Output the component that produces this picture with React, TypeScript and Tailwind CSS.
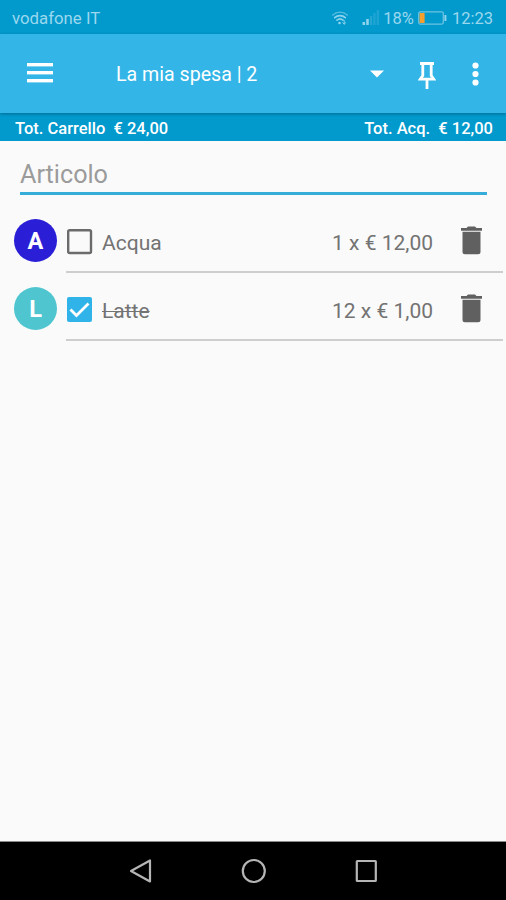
import { useState } from 'react';
import clsx from 'clsx';

interface Item {
  id: number;
  name: string;
  price: string;
  color: string;
  done: boolean;
}

const ITEMS: Item[] = [
  { id: 1, name: 'Acqua', price: '1 x € 12,00', color: 'bg-[#2a1fd6]', done: false },
  { id: 2, name: 'Latte', price: '12 x € 1,00', color: 'bg-[#4ec5cf]', done: true },
];

function WifiIcon() {
  return (
    <svg width="18" height="16" viewBox="0 0 18 16" fill="none" stroke="#8fd3ec" strokeLinecap="round">
      <path d="M1.5 5.2C5.8 1.2 12.2 1.2 16.5 5.2" strokeWidth="1.2" opacity="0.6" />
      <path d="M3.7 7.7C6.8 4.8 11.2 4.8 14.3 7.7" strokeWidth="1.7" />
      <path d="M6 10.2C7.8 8.6 10.2 8.6 12 10.2" strokeWidth="1.7" />
      <circle cx="8.5" cy="13" r="1.3" fill="#8fd3ec" stroke="none" />
      <path d="M13.2 10.6V14M11.8 12.8l1.4 1.3 1.4-1.3" strokeWidth="1" />
    </svg>
  );
}

function SignalIcon() {
  return (
    <svg width="18" height="16" viewBox="0 0 18 16" fill="#8fd3ec">
      <rect x="0.5" y="12" width="2.6" height="3" />
      <rect x="4.2" y="9" width="2.6" height="6" />
      <rect x="7.8" y="6" width="2.4" height="9" opacity="0.25" />
      <rect x="11.2" y="3" width="2.4" height="12" opacity="0.2" />
      <rect x="14.6" y="0" width="2.4" height="15" opacity="0.2" />
    </svg>
  );
}

function BatteryIcon() {
  return (
    <svg width="30" height="14" viewBox="0 0 30 14" fill="none">
      <rect x="0.7" y="0.9" width="24.6" height="12.2" rx="1.5" stroke="#6cc3e3" strokeWidth="1.3" />
      <rect x="1.6" y="2" width="5" height="10" fill="#f5a02c" />
      <rect x="26.4" y="4" width="2" height="6" rx="0.5" fill="#8fd3ec" />
    </svg>
  );
}

function StatusBar() {
  return (
    <header className="flex h-[34px] items-center bg-[#0299cd] pt-1 text-[#9bd8ee]">
      <span className="ml-3 text-[16.8px]">vodafone IT</span>
      <div className="mr-[13px] ml-auto flex items-center text-[16.5px]">
        <div className="pb-[2px]">
          <WifiIcon />
        </div>
        <div className="ml-[13px] pb-[2px]">
          <SignalIcon />
        </div>
        <span className="ml-[3px]">18%</span>
        <div className="ml-1 pb-[2px]">
          <BatteryIcon />
        </div>
        <span className="ml-1">12:23</span>
      </div>
    </header>
  );
}

function Toolbar() {
  return (
    <div className="relative z-10 flex h-[79px] items-center bg-[#33b5e7] text-white shadow-[0_1px_3px_rgba(0,0,0,0.3)]">
      <button aria-label="Menu" className="ml-[27px] pb-px">
        <svg width="26" height="20" viewBox="0 0 26 20" fill="white">
          <rect y="0" width="26" height="3.4" />
          <rect y="8" width="26" height="3.4" />
          <rect y="16" width="26" height="3.4" />
        </svg>
      </button>
      <span className="ml-[63px] pt-[3px] text-[19.6px]">La mia spesa | 2</span>
      <button aria-label="Liste" className="ml-auto">
        <svg width="14" height="8" viewBox="0 0 14 8" fill="white">
          <path d="M0 0.5h14L7 7.5z" />
        </svg>
      </button>
      <button aria-label="Fissa" className="ml-[34px] pt-[4px]">
        <svg width="18" height="30" viewBox="0 0 18 30" fill="none" stroke="white">
          <path d="M2 2.5h14" strokeWidth="3" />
          <path d="M4.8 3v11.5L2.2 18.2h13.6l-2.600-3.700V3" strokeWidth="2.8" />
          <path d="M9 18v10" strokeWidth="2.8" />
        </svg>
      </button>
      <button aria-label="Altro" className="mr-[27px] ml-[36px]">
        <svg width="7" height="24" viewBox="0 0 7 24" fill="white">
          <circle cx="3.5" cy="3.5" r="3.1" />
          <circle cx="3.5" cy="12" r="3.1" />
          <circle cx="3.5" cy="20.5" r="3.1" />
        </svg>
      </button>
    </div>
  );
}

function Checkbox({ checked, onChange }: { checked: boolean; onChange: () => void }) {
  return (
    <button role="checkbox" aria-checked={checked} onClick={onChange}>
      <svg width="27" height="27" viewBox="0 0 27 27" fill="none">
        {checked ? (
          <>
            <rect x="1" y="1" width="25" height="25" rx="2" fill="#2fb3e8" />
            <path d="M4.5 13.5l6 6L22.5 7.5" stroke="white" strokeWidth="2.8" />
          </>
        ) : (
          <rect x="2.2" y="2.2" width="22.8" height="22.8" rx="1.5" stroke="#6b6b6b" strokeWidth="2.4" />
        )}
      </svg>
    </button>
  );
}

function ItemRow({ item, onToggle }: { item: Item; onToggle: () => void }) {
  return (
    <li className="flex h-[68px] pl-[14px]">
      <div
        className={clsx(
          'mt-[14px] flex size-[43px] items-center justify-center rounded-full pt-[3px] text-[23.5px] font-bold text-white',
          item.color
        )}
      >
        {item.name[0]}
      </div>
      <div className="mr-[3px] ml-[9px] flex flex-1 items-center border-b-2 border-[#cecece] pt-[7px] text-[#737373]">
        <div className="pt-[6px]">
          <Checkbox checked={item.done} onChange={onToggle} />
        </div>
        <span className={clsx('ml-[9px] pt-[5px] text-[21px]', item.done && 'line-through decoration-1')}>
          {item.name}
        </span>
        <span className="ml-auto pt-[5px] text-[21px]">{item.price}</span>
        <button aria-label="Elimina" className="mr-[21px] ml-[28px] pb-[3px]">
          <svg width="21" height="29" viewBox="0 0 21 29" fill="#606060">
            <path d="M0 2h5.5L7 0.4h7L15.5 2H21v2.700H0z" />
            <path d="M1.5 5.8h18v20q0 2.500-2.500 2.500H4q-2.500 0-2.500-2.500z" />
          </svg>
        </button>
      </div>
    </li>
  );
}

function NavBar() {
  return (
    <nav className="flex h-[59px] items-center justify-center gap-[88px] border-t border-[#8a8a8a] bg-black pl-px">
      <svg width="24" height="26" viewBox="0 0 24 26" fill="none" stroke="#b5b5b5" strokeWidth="2.2" strokeLinejoin="round">
        <path d="M21 2.500v21L2 13z" />
      </svg>
      <svg width="26" height="26" viewBox="0 0 26 26" fill="none" stroke="#b5b5b5" strokeWidth="2.2">
        <circle cx="12.8" cy="13" r="11" />
      </svg>
      <svg width="24" height="26" viewBox="0 0 24 26" fill="none" stroke="#b5b5b5" strokeWidth="2.2">
        <rect x="1.8" y="3" width="19" height="20" rx="0.5" />
      </svg>
    </nav>
  );
}

export default function App() {
  const [items, setItems] = useState(ITEMS);

  const toggle = (id: number) => {
    setItems((list) => list.map((i) => (i.id === id ? { ...i, done: !i.done } : i)));
  };

  return (
    <div className="flex h-[900px] w-[506px] flex-col overflow-hidden bg-[#fafafa] font-['Roboto',sans-serif]">
      <StatusBar />
      <Toolbar />
      {/* Totali */}
      <div className="flex h-[28px] items-center justify-between bg-[#0299cd] pt-[4px] pr-[13px] pl-[15px] text-[16.5px] font-medium whitespace-pre text-white">
        <span>Tot. Carrello  € 24,00</span>
        <span>Tot. Acq.  € 12,00</span>
      </div>
      <main className="flex-1">
        <div className="mr-[19px] ml-5 flex h-[54px] items-center border-b-[3px] border-[#35add8] pt-[17px]">
          <input
            placeholder="Articolo"
            className="w-full bg-transparent text-[25.2px] text-[#737373] outline-none placeholder:text-[#9b9b9b]"
          />
        </div>
        <ul className="pt-[10px]">
          {items.map((item) => (
            <ItemRow key={item.id} item={item} onToggle={() => toggle(item.id)} />
          ))}
        </ul>
      </main>
      <NavBar />
    </div>
  );
}
